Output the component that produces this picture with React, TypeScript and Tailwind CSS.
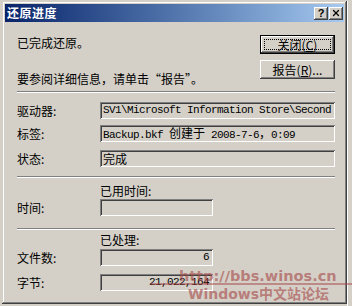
import { X } from "lucide-react"

const raised =
  "shadow-[inset_-1px_-1px_#404040,inset_1px_1px_#ffffff,inset_-2px_-2px_#808080,inset_2px_2px_#d4d0c8]"
const sunken =
  "shadow-[inset_1px_1px_#808080,inset_-1px_-1px_#ffffff,inset_2px_2px_#404040,inset_-2px_-2px_#d4d0c8]"
const mono = "font-['Liberation_Mono','Noto_Sans_CJK_SC',monospace] text-[11px] tracking-[-0.6px]"

const Etched = ({ className = "" }: { className?: string }) => (
  <div className={`h-[2px] border-t border-t-[#808080] border-b border-b-white ${className}`} />
)

type FieldProps = {
  label: string
  className?: string
  fieldClass?: string
  align?: "left" | "right"
  children?: React.ReactNode
}

const FieldRow = ({ label, className = "", fieldClass = "flex-1", align = "left", children }: FieldProps) => (
  <div className={`flex items-center ${className}`}>
    <div className="w-[83px] leading-[14px]">{label}</div>
    <div
      className={`h-[17px] ${fieldClass} ${sunken} overflow-hidden whitespace-nowrap flex items-center ${
        align === "right" ? "justify-end pr-[4px]" : "pl-[3px]"
      }`}
    >
      {children}
    </div>
  </div>
)

const Cjk = ({ children }: { children: React.ReactNode }) => (
  <span className="font-['Noto_Sans_CJK_SC',sans-serif] text-[12px] tracking-normal">{children}</span>
)

const App = () => {
  return (
    <div className="relative w-[352px] h-[306px] overflow-hidden bg-[#d4d0c8] text-black text-[12px] font-['Noto_Sans_CJK_SC','Noto_Sans',sans-serif]">
      <div className="flex pl-[2px] pt-[1px]">
        {/* dialog */}
        <div className="w-[345px] h-[303px] p-[3px] flex flex-col bg-[#d4d0c8] shadow-[inset_-1px_-1px_#404040,inset_1px_1px_#d4d0c8,inset_-2px_-2px_#808080,inset_2px_2px_#ffffff]">
          <div className="h-[18px] flex items-center pl-[2px] pr-[1px] bg-linear-to-r from-[#0a246a] to-[#a6caf0]">
            <span className="text-white font-bold text-[12px] leading-[14px] tracking-[0.5px]">还原进度</span>
            <div className="ml-auto flex gap-[1px]">
              <div className={`w-[14px] h-[13px] bg-[#d4d0c8] ${raised} flex items-center justify-center`}>
                <span className="font-['Liberation_Sans',sans-serif] font-bold text-[11px] leading-[11px]">?</span>
              </div>
              <div className={`w-[14px] h-[13px] bg-[#d4d0c8] ${raised} flex items-center justify-center`}>
                <X size={10} strokeWidth={3} />
              </div>
            </div>
          </div>

          <div className="flex flex-col pl-[12px] pr-[9px]">
            <div className="flex justify-between items-start mt-[13px]">
              <div className="flex flex-col pt-[1px]">
                <div className="leading-[14px]">已完成还原。</div>
                <div className="leading-[14px] mt-[22px]">要参阅详细信息，请单击“报告”。</div>
              </div>
              <div className="flex flex-col gap-[6px]">
                <div className="w-[75px] h-[19px] border border-black">
                  <div className={`w-full h-full ${raised} p-[3px]`}>
                    <div className="w-full h-full border border-dotted border-black flex items-center justify-center leading-[12px]">
                      关闭(<u>C</u>)
                    </div>
                  </div>
                </div>
                <div className={`w-[75px] h-[19px] ${raised} flex items-center justify-center leading-[12px]`}>
                  报告(<u>R</u>)...
                </div>
              </div>
            </div>

            <Etched className="mt-[5px]" />

            <FieldRow label="驱动器:" className="mt-[9px]">
              <span className={mono}>SV1\Microsoft Information Store\Second</span>
            </FieldRow>
            <FieldRow label="标签:" className="mt-[6px]">
              <span className={mono}>
                Backup.bkf <Cjk>创建于</Cjk> 2008-7-6<Cjk>，</Cjk>0:09
              </span>
            </FieldRow>
            <FieldRow label="状态:" className="mt-[8px]">
              <span className="leading-[14px]">完成</span>
            </FieldRow>

            <Etched className="mt-[9px]" />

            <div className="ml-[83px] mt-[6px] leading-[14px]">已用时间:</div>
            <FieldRow label="时间:" className="mt-[1px]" fieldClass="w-[113px]" />

            <Etched className="mt-[12px]" />

            <div className="ml-[83px] mt-[3px] leading-[14px]">已处理:</div>
            <FieldRow label="文件数:" className="mt-[2px]" fieldClass="w-[113px]" align="right">
              <span className={mono}>6</span>
            </FieldRow>
            <FieldRow label="字节:" className="mt-[8px]" fieldClass="w-[113px]" align="right">
              <span className={mono}>21,022,164</span>
            </FieldRow>
          </div>
        </div>
        {/* edge of the window behind */}
        <div className="flex-1 h-[306px] border-l border-l-white" />
      </div>

      {/* watermark */}
      <div className="absolute left-[150px] right-0 top-[269px] flex flex-col text-[rgba(165,70,70,0.62)] pointer-events-none">
        <div className="pl-[29px] font-['DejaVu_Sans',sans-serif] font-bold text-[14.5px] leading-[14px]">
          http://bbs.winos.cn
        </div>
        <div className="h-[2px] bg-[rgba(165,70,70,0.5)]" />
        <div className="pl-[38px] pt-[2px] font-['DejaVu_Sans','Noto_Sans_CJK_SC',sans-serif] font-bold text-[14px] leading-[14px]">
          Windows中文站论坛
        </div>
      </div>
    </div>
  )
}

export default App
